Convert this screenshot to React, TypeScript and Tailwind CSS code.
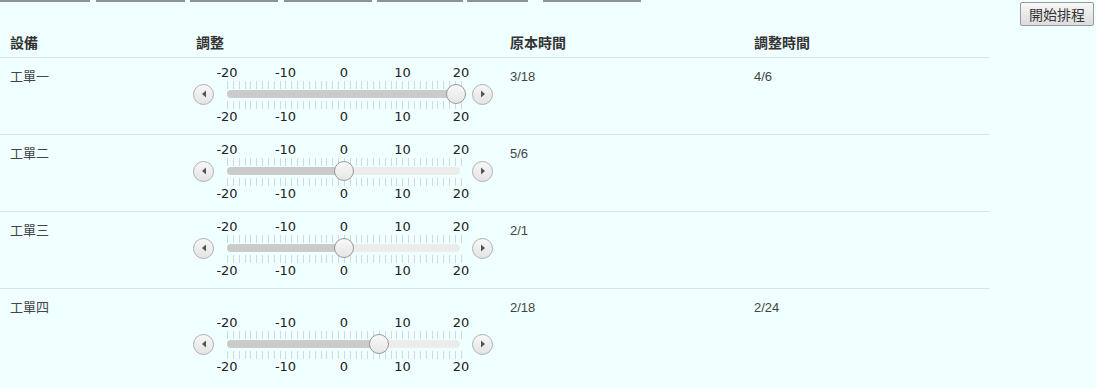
import React from "react"

const tabs = [
  [0, 90],
  [96, 185],
  [190, 278],
  [284, 372],
  [377, 463],
  [467, 528],
  [543, 641],
]

const rows = [
  { name: "工單一", value: 20, orig: "3/18", adj: "4/6" },
  { name: "工單二", value: 0, orig: "5/6", adj: "" },
  { name: "工單三", value: 0, orig: "2/1", adj: "" },
  { name: "工單四", value: 6, orig: "2/18", adj: "2/24", tall: true },
]

const labels = ["-20", "-10", "0", "10", "20"]

function Labels() {
  return (
    <div className="flex justify-between w-[264px] ml-[19px] text-[13px] leading-[14px] text-[#222] font-['DejaVu_Sans',sans-serif]">
      {labels.map((l) => (
        <span key={l} className="w-[30px] text-center">{l}</span>
      ))}
    </div>
  )
}

function Ticks() {
  return (
    <div className="flex justify-between w-[235px] h-[8px] ml-[34px]">
      {Array.from({ length: 41 }).map((_, i) => (
        <span key={i} className="w-px h-full bg-[#d3dada]" />
      ))}
    </div>
  )
}

function ArrowBtn({ dir }: { dir: "left" | "right" }) {
  return (
    <div className="w-[21px] h-[21px] rounded-full border border-[#b0b0b0] bg-gradient-to-b from-[#f7f7f7] to-[#e4e4e4] flex items-center justify-center shrink-0">
      <svg width="6" height="8" viewBox="0 0 6 8">
        {dir === "left" ? (
          <path d="M5 0.5 L1 4 L5 7.5 Z" fill="#555" />
        ) : (
          <path d="M1 0.5 L5 4 L1 7.5 Z" fill="#555" />
        )}
      </svg>
    </div>
  )
}

function Slider({ value }: { value: number }) {
  const pos = Math.min(Math.max(((value + 20) / 40) * 234, 5), 229)
  return (
    <div className="flex flex-col w-[300px]">
      <Labels />
      <div className="h-[1px]" />
      <Ticks />
      <div className="flex items-center h-[12px] my-[-1px]">
        <ArrowBtn dir="left" />
        <div className="relative w-[234px] h-[8px] ml-[13px] mr-[12px] rounded-full bg-[#ececec]">
          <div className="absolute left-0 top-0 h-full rounded-full bg-[#cbcbcb]" style={{ width: pos }} />
          <div
            className="absolute top-[-6px] w-[20px] h-[20px] rounded-full border border-[#999] bg-gradient-to-b from-[#f8f8f8] to-[#e6e6e6]"
            style={{ left: pos - 10 }}
          />
        </div>
        <ArrowBtn dir="right" />
      </div>
      <div className="h-[2px]" />
      <Ticks />
      <div className="h-[1px]" />
      <Labels />
    </div>
  )
}

export default function App() {
  return (
    <div className="min-h-[388px] bg-[#f0ffff] text-[#333] font-['Liberation_Sans','Noto_Sans_CJK_TC',sans-serif] overflow-hidden">
      <div className="flex items-start justify-between h-[28px]">
        <div className="relative h-[2px] w-[642px]">
          {tabs.map(([a, b]) => (
            <span key={a} className="absolute top-0 h-[2px] bg-[#8a9494]" style={{ left: a, width: b - a }} />
          ))}
        </div>
        <button className="mt-[2px] mr-[2px] w-[74px] h-[24px] rounded-[2px] border border-[#9a9a9a] bg-gradient-to-b from-[#f8f8f8] to-[#dcdcdc] text-[14px] text-[#333] font-['Noto_Sans_CJK_TC',sans-serif]">
          開始排程
        </button>
      </div>

      <div className="w-[990px]">
        <div className="grid grid-cols-[186px_314px_244px_246px] h-[30px] items-center border-b border-[#d5e8e8] text-[14px] font-bold font-['Noto_Sans_CJK_TC',sans-serif] text-[#333]">
          <div className="pl-[10px]">設備</div>
          <div className="pl-[10px]">調整</div>
          <div className="pl-[10px]">原本時間</div>
          <div className="pl-[10px]">調整時間</div>
        </div>

        {rows.map((r) => (
          <div
            key={r.name}
            className={`grid grid-cols-[186px_314px_244px_246px] border-b border-[#d5e8e8] text-[13px] text-[#444] ${r.tall ? "h-[110px]" : "h-[77px]"}`}
          >
            <div className="pl-[10px] pt-[8px] font-['Noto_Sans_CJK_TC',sans-serif]">{r.name}</div>
            <div className={`pl-[7px] ${r.tall ? "pt-[27px]" : "pt-[8px]"}`}>
              <Slider value={r.value} />
            </div>
            <div className="pl-[10px] pt-[9px]">{r.orig}</div>
            <div className="pl-[10px] pt-[9px]">{r.adj}</div>
          </div>
        ))}
      </div>
    </div>
  )
}
